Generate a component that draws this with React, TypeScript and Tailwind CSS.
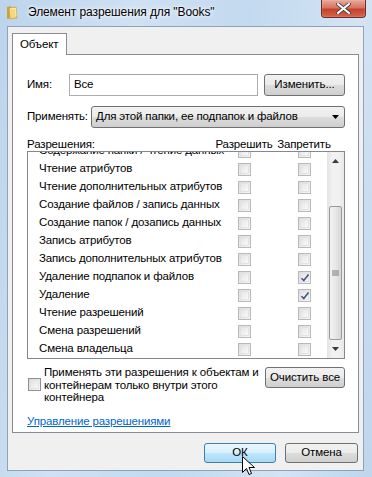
import React from "react";

const rows: { name: string; deny?: boolean }[] = [
  { name: "Содержание папки / чтение данных" },
  { name: "Чтение атрибутов" },
  { name: "Чтение дополнительных атрибутов" },
  { name: "Создание файлов / запись данных" },
  { name: "Создание папок / дозапись данных" },
  { name: "Запись атрибутов" },
  { name: "Запись дополнительных атрибутов" },
  { name: "Удаление подпапок и файлов", deny: true },
  { name: "Удаление", deny: true },
  { name: "Чтение разрешений" },
  { name: "Смена разрешений" },
  { name: "Смена владельца" },
];

const font = { fontFamily: '"Liberation Sans", Arial, sans-serif' };

const Check = (props: { checked?: boolean; dim?: boolean }) => (
  <span
    className={
      "relative flex h-[13px] w-[13px] shrink-0 items-center justify-center border " +
      (props.dim
        ? "border-[#b9b9b9] bg-gradient-to-br from-[#dcdcdc] to-[#f7f7f7]"
        : "border-[#8f8f8f] bg-gradient-to-br from-[#d6d6d6] to-[#fbfbfb]")
    }
  >
    <span className="h-[9px] w-[9px] border border-[#e2e2e2] bg-gradient-to-br from-[#e4e4e4] to-[#f9f9f9]" />
    {props.checked && (
      <svg className="absolute left-[1px] top-[1px]" width="10" height="10" viewBox="0 0 10 10">
        <path d="M1.5 5.2 L3.8 7.6 L8.5 1.5" fill="none" stroke="#42567f" strokeWidth="1.6" />
      </svg>
    )}
  </span>
);

const Btn = (props: { label: string; className?: string; hot?: boolean }) => (
  <button
    className={
      "flex items-center justify-center rounded-[3px] border text-[11.5px] tracking-[-0.1px] text-black " +
      (props.hot
        ? "border-[#3c7fb1] bg-[linear-gradient(#eaf6fd_0%,#d9f0fc_50%,#bee6fd_50%,#a7d9f5_100%)] "
        : "border-[#707070] bg-[linear-gradient(#f2f2f2_0%,#ebebeb_50%,#dddddd_50%,#cfcfcf_100%)] ") +
      (props.className ?? "")
    }
  >
    {props.label}
  </button>
);

export default function App() {
  return (
    <div
      className="relative flex h-[477px] w-[372px] flex-col overflow-hidden bg-[linear-gradient(100deg,#bcd4ec_0%,#cfe1f3_30%,#c3d9ef_55%,#d3e4f4_80%,#bed5ec_100%)] text-[11.5px] tracking-[-0.15px] text-black"
      style={font}
    >
      {/* title bar */}
      <div className="flex h-[26px] shrink-0 items-start">
        <svg className="ml-[6px] mt-[5px]" width="12" height="15" viewBox="0 0 12 15">
          <path d="M1 2 L5 1 L5 13 L1 14 Z" fill="#c9a43a" />
          <path d="M3 3 L10 2 L11 13 L4 14 Z" fill="#f3d77a" stroke="#c9a13c" strokeWidth="0.8" />
          <path d="M4 4 L9.5 3.4 L10 11" fill="none" stroke="#fff2bf" strokeWidth="0.8" />
        </svg>
        <span className="ml-[10px] mt-[4px] text-[12px] leading-[16px] tracking-[-0.1px] [text-shadow:0_0_6px_#fff,0_0_3px_#fff]">
          Элемент разрешения для "Books"
        </span>
        <div className="ml-auto mr-[6px] flex h-[18px] w-[45px] items-center justify-center rounded-b-[4px] border border-t-0 border-[#6f2c24] bg-[linear-gradient(#e8a99b_0%,#d7745f_45%,#c5422b_55%,#d2654e_100%)] shadow-[inset_0_0_1px_#fff]">
          <svg width="15" height="11" viewBox="0 0 15 11">
            <path d="M2 1 L13 10 M13 1 L2 10" stroke="#3b3b3b" strokeWidth="3.6" strokeLinecap="square" />
            <path d="M2 1 L13 10 M13 1 L2 10" stroke="#ffffff" strokeWidth="2" strokeLinecap="square" />
          </svg>
        </div>
      </div>

      {/* client area */}
      <div className="ml-[7px] mr-[8px] flex h-[445px] shrink-0 flex-col border border-[#8ea2ba] bg-[#f0f0f0] px-[4px]">
        {/* tab */}
        <div className="mt-[6px] flex h-[21px] shrink-0">
          <div className="relative z-10 flex h-[22px] w-[55px] items-center border border-b-0 border-[#898c95] bg-white pl-[7px]">
            Объект
          </div>
        </div>

        {/* tab panel */}
        <div className="flex h-[379px] shrink-0 flex-col border border-[#898c95] bg-white pl-[14px] pr-[13px] pt-[19px]">
          <div className="flex h-[22px] items-center">
            <span className="w-[42px]">Имя:</span>
            <div className="flex h-[22px] w-[189px] items-center border border-[#abadb3] border-t-[#a4a7ad] pl-[4px]">
              Все
            </div>
            <Btn label="Изменить..." className="ml-auto h-[22px] w-[81px]" />
          </div>

          <div className="mt-[10px] flex h-[22px] items-center">
            <span className="w-[64px]">Применять:</span>
            <div className="flex h-[22px] flex-1 items-center rounded-[3px] border border-[#707070] bg-[linear-gradient(#f2f2f2_0%,#ebebeb_50%,#dddddd_50%,#cfcfcf_100%)] pl-[4px] pr-[5px]">
              <span>Для этой папки, ее подпапок и файлов</span>
              <svg className="ml-auto" width="7" height="4" viewBox="0 0 7 4">
                <path d="M0 0 L7 0 L3.5 4 Z" fill="#000" />
              </svg>
            </div>
          </div>

          <div className="mt-[10px] flex h-[13px] items-center leading-[13px]">
            <span className="flex-1">Разрешения:</span>
            <span className="w-[60px] text-center">Разрешить</span>
            <span className="w-[60px] text-center">Запретить</span>
            <span className="w-[11px]" />
          </div>

          {/* permissions list */}
          <div className="flex h-[208px] border border-[#828790] bg-white">
            <div className="flex-1 overflow-hidden">
              <div className="-mt-[10px]">
                {rows.map((r) => (
                  <div key={r.name} className="flex h-[18px] items-center">
                    <span className="w-[210px] whitespace-nowrap pl-[11px]">{r.name}</span>
                    <Check dim />
                    <span className="w-[47px]" />
                    <Check dim checked={r.deny} />
                  </div>
                ))}
              </div>
            </div>
            <div className="flex w-[17px] flex-col bg-[linear-gradient(90deg,#e3e3e3,#f1f1f1_30%,#f1f1f1_70%,#e8e8e8)]">
              <div className="flex h-[17px] items-center justify-center">
                <svg width="7" height="4" viewBox="0 0 7 4">
                  <path d="M0 4 L7 4 L3.5 0 Z" fill="#3a3a3a" />
                </svg>
              </div>
              <div className="h-[37px]" />
              <div className="mx-[2px] flex h-[134px] items-center justify-center rounded-[2px] border border-[#9a9a9a] bg-[linear-gradient(90deg,#f2f2f2,#e8e8e8_50%,#d6d6d6)]">
                <svg width="7" height="7" viewBox="0 0 7 7">
                  <path d="M0 1 H7 M0 3 H7 M0 5 H7" stroke="#7a7a7a" strokeWidth="1" />
                </svg>
              </div>
              <div className="flex flex-1 items-center justify-center">
                <svg width="7" height="4" viewBox="0 0 7 4">
                  <path d="M0 0 L7 0 L3.5 4 Z" fill="#3a3a3a" />
                </svg>
              </div>
            </div>
          </div>

          {/* apply-only checkbox */}
          <div className="mt-[7px] flex">
            <div className="flex items-center pl-[1px]">
              <Check />
            </div>
            <span className="ml-[3px] w-[218px] leading-[12.5px]">
              Применять эти разрешения к объектам и контейнерам только внутри этого контейнера
            </span>
            <Btn label="Очистить все" className="ml-auto mt-[1px] h-[21px] w-[80px]" />
          </div>

          <a className="mt-[10px] w-fit leading-[14px] text-[#0066cc] underline">
            Управление разрешениями
          </a>
        </div>

        {/* dialog buttons */}
        <div className="mt-[10px] flex justify-end gap-[9px] pr-[1px]">
          <Btn label="ОК" hot className="h-[20px] w-[72px]" />
          <Btn label="Отмена" className="h-[20px] w-[73px]" />
        </div>
      </div>

      {/* mouse pointer over OK */}
      <svg className="absolute left-[242px] top-[456px]" width="13" height="21" viewBox="0 0 13 21">
        <path
          d="M0.5 0.5 L0.5 16.5 L4.5 12.5 L7 18.5 L9.5 17.5 L7 11.5 L12.5 11.5 Z"
          fill="#fff"
          stroke="#000"
          strokeWidth="1"
        />
      </svg>
    </div>
  );
}
